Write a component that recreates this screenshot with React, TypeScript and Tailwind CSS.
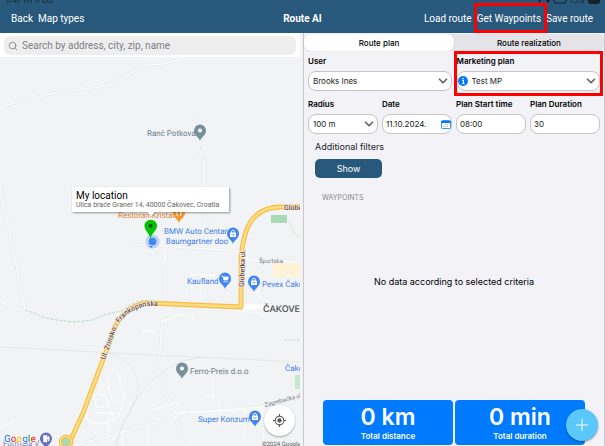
import type { ReactNode } from "react";
import { ChevronDown, Search } from "lucide-react";

const FONT = "font-['Inter','Liberation_Sans',sans-serif]";

interface PinProps {
    x: number;
    y: number;
    color: string;
    children?: ReactNode;
}

// x / y is the tip of the pin
function Pin({ x, y, color, children }: PinProps) {
    return (
        <g transform={`translate(${x} ${y})`}>
            <path
                d="M0 0C-1-4-6-5.500-6-10.500A6 6 0 0 1 6-10.500C6-5.500 1-4 0 0Z"
                fill={color}
            />
            {children}
        </g>
    );
}

function Bag() {
    return (
        <g>
            <rect x="-3" y="-11.500" width="6" height="4.500" rx="0.600" fill="#fff" />
            <path d="M-1.500-11v-1.200a1.500 1.500 0 0 1 3 0v1.200" fill="none" stroke="#fff" strokeWidth="0.900" />
            <path d="M-1.300-10a1.300 1.300 0 0 0 2.600 0" fill="none" stroke="#4285f4" strokeWidth="0.700" />
        </g>
    );
}

function MapDrawing() {
    return (
        <svg
            viewBox="0 57 302 389"
            preserveAspectRatio="xMinYMin slice"
            textRendering="geometricPrecision"
            className="absolute inset-0 h-full w-full font-['Roboto','Liberation_Sans',sans-serif]"
            role="img"
            aria-label="Map"
        >
            <rect x="0" y="57" width="302" height="389" fill="#f1f3f4" />

            {/* minor roads */}
            <g fill="none" stroke="#e6e8ea" strokeWidth="2.400">
                <path d="M0 107L28 99L62 92L112 85L145 65L165 64L185 57" />
                <path d="M0 189L13 250L25 310L18 309L0 302" />
                <path d="M193 110L195 132L201 155L204 163V205L206 245" />
                <path d="M132 244L160 246L210 249L240 251M213 208L209 248M181 222L180 246M166 246V262" />
                <path d="M164 250L165 290L162 318L160 350L158 370L166 393L185 446" />
                <path d="M70 446L110 436L152 424L190 412L262 407L302 397" />
            </g>
            <g fill="none" stroke="#fafbfb" strokeWidth="1.400">
                <path d="M0 107L28 99L62 92L112 85L145 65L165 64L185 57" />
                <path d="M0 189L13 250L25 310L18 309L0 302" />
                <path d="M193 110L195 132L201 155L204 163V205L206 245" />
                <path d="M132 244L160 246L210 249L240 251M213 208L209 248M181 222L180 246M166 246V262" />
                <path d="M164 250L165 290L162 318L160 350L158 370L166 393L185 446" />
                <path d="M162 321L170 319L178 315L192 317L195 321M190 275H215M205 274L200 292M192 280V292" />
                <path d="M244 250L248 260L302 262M258 278V296L270 303M238 311L265 314" />
                <path d="M70 446L110 436L152 424L190 412L262 407L302 397" />
                <path d="M174 413L262 409M150 410L180 402M219 403L220 426M205 394L213 397V380M245 410V434M262 407L264 446" />
                <path d="M93 396L97 394L106 396L110 405L97 408ZM97 394L102 384L115 424M106 380L113 402M117 372L125 395L118 418L108 421L109 436M83 411L90 423L109 423M95 413H117" />
                <path d="M141 334L144 331H155M0 427L14 422M50 434L66 438M112 440L122 431L123 446M148 430V446" />
            </g>
            <g fill="none" stroke="#e2e5e8" strokeWidth="0.800">
                <path d="M0 347L115 353L152 355L302 362" />
                <path d="M108 353C128 358 139 372 138 390C136 412 119 422 116 446" />
                <path d="M116 446C126 410 140 390 158 376C172 364 184 359 205 357" />
                <path d="M284 340H302" strokeWidth="1.500" />
                <path d="M289 221C292 230 296 236 302 239" stroke="#cfe5d8" />
            </g>
            <path
                d="M25 310L34 313L42 317L57 320L75 322L92 320L104 315L121 311L136 302L144 300L153 302"
                fill="none"
                stroke="#b6dcc5"
                strokeWidth="1"
                strokeDasharray="3 1.500"
            />

            <rect x="271" y="215" width="16" height="8" fill="#a8dab5" />
            <path d="M273 263H302V277H273Z" fill="#fef3d6" />
            <path d="M299 226L302 223V238L299 234Z" fill="#fef3d6" />
            <rect x="295" y="375" width="7" height="14" rx="1" fill="#c2e8cd" />

            {/* main roads */}
            <path d="M241 307H264" stroke="#fff" strokeWidth="5" />
            <g fill="none" strokeLinejoin="round">
                <path
                    d="M68 446L83 413L104 357L111 338C115 320 129 304 149 303L241 307V258C243 232 250 207 281 207H302"
                    stroke="#f5bd42"
                    strokeWidth="4.800"
                />
                <path
                    d="M68 446L83 413L104 357L111 338C115 320 129 304 149 303L241 307V258C243 232 250 207 281 207H302"
                    stroke="#fddb85"
                    strokeWidth="2.600"
                />
            </g>
            <circle cx="66" cy="442" r="5.500" fill="#a8dab5" stroke="#f5bd42" strokeWidth="3.500" />
            <circle cx="66" cy="442" r="5.500" fill="none" stroke="#fddb85" strokeWidth="1.500" />

            {/* road names */}
            <defs>
                <path id="zrinsko" d="M105 360L115 332Q123 310 148 306L168 306" />
            </defs>
            <g fill="#6f4a33" stroke="#f1f3f4" strokeWidth="1.200" paintOrder="stroke" fontSize="7" fontWeight="500">
                <text>
                    <textPath href="#zrinsko">Ul. Zrinsko - Frankopanska</textPath>
                </text>
                <text transform="translate(244 287) rotate(-88)">Globetka ul.</text>
                <text x="284" y="210">Globe</text>
            </g>
            <g fill="#777b7f" fontSize="6">
                <text x="259" y="263">Športska</text>
                <text transform="translate(265 407) rotate(-15)">Zagrebačka ul.</text>
            </g>

            {/* places */}
            <g fontSize="8" fill="#3f7ee8" stroke="#f1f3f4" strokeWidth="1" paintOrder="stroke">
                <text x="147" y="136" fill="#698091">Ranč Potkova</text>
                <text x="190" y="374" fill="#698091">Ferro-Preis d.o.o</text>
                <text x="118" y="218" fill="#de8434">Restoran Kristal</text>
                <text x="164" y="234">BMW Auto Centar</text>
                <text x="166" y="244">Baumgartner doo</text>
                <text x="187" y="284">Kaufland</text>
                <text x="262" y="287">Pevex Čako</text>
                <text x="285" y="371">Čako</text>
                <text x="198" y="422">Super Konzum</text>
                <text x="3" y="446" fill="#7b82b8">Formula V</text>
            </g>
            <text x="263" y="312" fontSize="9" fontWeight="500" fill="#4b4d50" className="font-['Inter',sans-serif]">
                ČAKOVE
            </text>

            <Pin x={200} y={141} color="#78909c">
                <circle cy="-10.500" r="2" fill="#fff" />
            </Pin>
            <Pin x={182} y={379} color="#78909c">
                <circle cy="-10.500" r="2" fill="#fff" />
            </Pin>
            <Pin x={179} y={223} color="#f29a2e">
                <path d="M-2-14V-7M1.500-14V-7M-3-14v3h2v-3M1.500-14h1.500v4h-1.500" fill="none" stroke="#fff" strokeWidth="0.900" />
            </Pin>
            <Pin x={233} y={244} color="#4285f4">
                <Bag />
            </Pin>
            <Pin x={225} y={289} color="#4285f4">
                <path d="M-3.500-13h1.300l1.200 4h3.500l1-3h-5" fill="#fff" stroke="#fff" strokeWidth="0.800" />
                <circle cx="-0.800" cy="-7.300" r="0.700" fill="#fff" />
                <circle cx="2" cy="-7.300" r="0.700" fill="#fff" />
            </Pin>
            <Pin x={254} y={292} color="#4285f4">
                <Bag />
            </Pin>
            <Pin x={255} y={427} color="#4285f4">
                <Bag />
            </Pin>
            <Pin x={46} y={449} color="#6670bd">
                <path d="M-2.500-7v-6.500h3.500V-7ZM1-10h1.200v2h1v-4L2-13.300" fill="#fff" stroke="#fff" strokeWidth="0.500" />
            </Pin>

            {/* current position */}
            <circle cx="152.500" cy="241.500" r="7" fill="#bcd2f8" />
            <circle cx="152.500" cy="241.500" r="3.800" fill="#4285f4" />
            <path d="M149 246l2 2 2-2z" fill="#4285f4" />
            <path d="M150.500 240C150 233 144.500 231 144.500 226A6.200 6.200 0 0 1 157 226C157 231 151 233 150.500 240Z" fill="#00c400" />
            <circle cx="150.700" cy="226" r="2" fill="#064d06" />

            <text x="4" y="442" fontSize="10" fontWeight="500" stroke="#fff" strokeWidth="1.500" paintOrder="stroke">
                <tspan fill="#4285f4">G</tspan>
                <tspan fill="#ea4335">o</tspan>
                <tspan fill="#fbbc04">o</tspan>
                <tspan fill="#4285f4">g</tspan>
                <tspan fill="#34a853">l</tspan>
                <tspan fill="#ea4335">e</tspan>
            </text>
            <text x="262" y="446" fontSize="6" fill="#555">
                ©2024 Google
            </text>
        </svg>
    );
}

function MapPanel() {
    return (
        <section className="flex flex-1 flex-col">
            <div className="bg-white px-1 pt-[3px] pb-[2px]">
                <label className="flex h-[19px] items-center gap-1 rounded-md bg-[#eeeeef] px-1 text-[#808084]">
                    <Search size={10} strokeWidth={2} />
                    <input
                        type="search"
                        aria-label="Search"
                        placeholder="Search by address, city, zip, name"
                        className="min-w-0 flex-1 bg-transparent font-['Roboto',sans-serif] text-[10px] outline-none placeholder:text-[#808084]"
                    />
                </label>
            </div>
            <div className="relative flex-1 overflow-hidden bg-[#f1f3f4]">
                <MapDrawing />
                <div className="absolute top-[130px] left-[72px] w-[157px] bg-white px-1 py-[3px] font-['Roboto',sans-serif] shadow-[1px_1px_2px_#0006]">
                    <h2 className="text-[10px] leading-[11px] text-black">My location</h2>
                    <p className="text-[7px] leading-[8px] whitespace-nowrap text-[#666]">
                        Ulica braće Graner 14, 40000 Čakovec, Croatia
                    </p>
                    <svg viewBox="0 0 8 5" className="absolute top-full left-[75px] h-[5px] w-2">
                        <path d="M0 0H8L4 5Z" fill="#fff" />
                        <path d="M0 0L4 5L8 0" fill="none" stroke="#999" strokeWidth="0.600" />
                    </svg>
                </div>
                <button
                    aria-label="Center on my location"
                    className="absolute right-[5px] bottom-[10px] flex size-[31px] items-center justify-center rounded-full bg-white shadow-[0_1px_2px_#0005]"
                >
                    <svg viewBox="0 0 24 24" className="size-[13px]" fill="none" stroke="#555" strokeWidth="2">
                        <circle cx="12" cy="12" r="8" />
                        <circle cx="12" cy="12" r="4" fill="#555" stroke="none" />
                        <path d="M12 0V4M12 20V24M0 12H4M20 12H24" />
                    </svg>
                </button>
            </div>
        </section>
    );
}

interface FieldProps {
    id: string;
    label: string;
    children: ReactNode;
}

function Field({ id, label, children }: FieldProps) {
    return (
        <div className="min-w-0">
            <label htmlFor={id} className="block text-[8px] leading-[12px] font-semibold whitespace-nowrap text-black">
                {label}
            </label>
            <div className="relative mt-1 flex h-5 items-center rounded-lg border border-[#c4c4c8] bg-white text-[8px] text-[#222]">
                {children}
            </div>
        </div>
    );
}

function SelectBox({ id, value, inset = "pl-1" }: { id: string; value: string; inset?: string }) {
    return (
        <>
            <select id={id} defaultValue={value} className={`h-full w-full appearance-none bg-transparent outline-none ${inset}`}>
                <option>{value}</option>
            </select>
            <ChevronDown size={14} strokeWidth={3} className="pointer-events-none absolute right-px text-[#666]" />
        </>
    );
}

function RoutePanel() {
    return (
        <section className="relative flex flex-1 flex-col border-x border-[#c8c8cc] bg-[#f2f2f7]">
            <div
                role="tablist"
                className="mt-px flex h-[17px] rounded-md bg-[#e3e3e8] text-[8px] font-medium text-black"
            >
                <button role="tab" aria-selected="true" className="flex-1 rounded-md bg-white shadow-[0_0_1px_#0004]">
                    Route plan
                </button>
                <button role="tab" aria-selected="false" className="flex-1">
                    Route realization
                </button>
            </div>

            <div className="grid grid-cols-2 gap-x-[5px] px-1 pt-1">
                <Field id="user" label="User">
                    <SelectBox id="user" value="Brooks Ines" />
                </Field>
                <div className="relative">
                    <Field id="plan" label="Marketing plan">
                        <svg viewBox="0 0 10 10" className="pointer-events-none absolute left-0 size-[10px]">
                            <circle cx="5" cy="5" r="5" fill="#007aff" />
                            <path d="M4 4.300H5.500V7.500M3.900 7.500H6.600" fill="none" stroke="#fff" strokeWidth="1" />
                            <circle cx="5" cy="2.500" r="0.800" fill="#fff" />
                        </svg>
                        <SelectBox id="plan" value="Test MP" inset="pl-[14px]" />
                    </Field>
                    <div className="pointer-events-none absolute -inset-x-[3px] -top-1 -bottom-[5px] border-[3px] border-[#f00]" />
                </div>
            </div>

            <div className="grid grid-cols-4 gap-x-1 px-1 pt-[7px]">
                <Field id="radius" label="Radius">
                    <SelectBox id="radius" value="100 m" />
                </Field>
                <Field id="date" label="Date">
                    <input id="date" defaultValue="11.10.2024." className="w-full bg-transparent pl-[3px] outline-none" />
                    <svg viewBox="0 0 10 9" className="pointer-events-none absolute right-0 h-[9px] w-[10px]">
                        <rect x="0.500" y="0.500" width="9" height="8" rx="1" fill="#fff" stroke="#3395ff" />
                        <path d="M0 1H10V3H0Z" fill="#007aff" />
                        <path d="M4 4.500H8M2 6.500H8" stroke="#8cc3ff" strokeDasharray="1 1" />
                    </svg>
                </Field>
                <Field id="start" label="Plan Start time">
                    <input id="start" defaultValue="08:00" className="w-full bg-transparent pl-[3px] outline-none" />
                </Field>
                <Field id="duration" label="Plan Duration">
                    <input id="duration" defaultValue="30" className="w-full bg-transparent pl-[3px] outline-none" />
                </Field>
            </div>

            <div className="px-[11px] pt-[6px]">
                <h3 className="text-[9px] leading-[14px] text-[#222]">Additional filters</h3>
                <button className="mt-1 h-[19px] w-[67px] rounded-[5px] bg-[#28597c] text-[9px] text-white">Show</button>
            </div>
            <h3 className="px-[18px] pt-[14px] text-[7px] leading-[12px] text-[#8a8a8e]">WAYPOINTS</h3>

            <p className="flex flex-1 items-center justify-center pb-[41px] text-[9px] text-black">
                No data according to selected criteria
            </p>

            <div className="flex gap-[2px] px-[19px] pb-[1px] text-center text-white">
                <div className="flex-1 rounded-[4px] bg-[#007aff] py-[3px]">
                    <div className="text-[23px] leading-[28px] font-semibold">0 km</div>
                    <div className="text-[8px] leading-[11px] font-semibold">Total distance</div>
                </div>
                <div className="flex-1 rounded-[4px] bg-[#007aff] py-[3px]">
                    <div className="text-[23px] leading-[28px] font-semibold">0 min</div>
                    <div className="text-[8px] leading-[11px] font-semibold">Total duration</div>
                </div>
            </div>
            <button
                aria-label="Add"
                className="absolute right-[6px] bottom-[5px] flex size-8 items-center justify-center rounded-full bg-[#5ac8fa] shadow-[0_1px_2px_#0006]"
            >
                <svg viewBox="0 0 12 12" className="size-3" stroke="#fff" strokeWidth="1">
                    <path d="M6 0V12M0 6H12" />
                </svg>
            </button>
        </section>
    );
}

function Header() {
    return (
        <header className="bg-[#28597c] text-[10px] text-white">
            <div className="flex h-1 items-end justify-between overflow-hidden pr-1 pl-[5px] text-[7px] leading-[6px] text-[#14202b]">
                <span>11:41 &nbsp;Fri 11 Oct</span>
                <span className="flex items-end gap-[3px]">
                    <svg viewBox="0 0 30 6" className="h-[6px] w-[30px]" fill="none" stroke="#14202b">
                        <path d="M1 2L4 1L3 5Z" fill="#14202b" stroke="none" />
                        <path d="M8 1L11 5L14 1Z" fill="#14202b" stroke="none" />
                        <path d="M17 0V3Q17 5 19 5H27Q29 5 29 3V0" />
                    </svg>
                    75%
                    <svg viewBox="0 0 13 6" className="h-[6px] w-[13px]">
                        <path d="M0 0H12V3Q12 6 9 6H3Q0 6 0 3Z" fill="#14202b" />
                    </svg>
                </span>
            </div>
            <div className="grid h-[29px] grid-cols-[1fr_auto_1fr] items-center font-['Roboto',sans-serif]">
                <nav className="flex gap-[5px] pl-[11px]">
                    <button>Back</button>
                    <button>Map types</button>
                </nav>
                <h1 className="font-bold">Route AI</h1>
                <nav className="flex justify-end gap-[5px] pr-3 whitespace-nowrap">
                    <button>Load route</button>
                    <div className="relative z-10">
                        <button>Get Waypoints</button>
                        <div className="pointer-events-none absolute -top-[8px] -right-[6px] -bottom-[7px] -left-[3px] border-[3px] border-[#f00]" />
                    </div>
                    <button>Save route</button>
                </nav>
            </div>
        </header>
    );
}

export default function App() {
    return (
        <div className={`flex min-h-screen flex-col bg-[#f2f2f7] ${FONT}`}>
            <Header />
            <main className="flex flex-1 gap-[3px]">
                <MapPanel />
                <RoutePanel />
            </main>
        </div>
    );
}
